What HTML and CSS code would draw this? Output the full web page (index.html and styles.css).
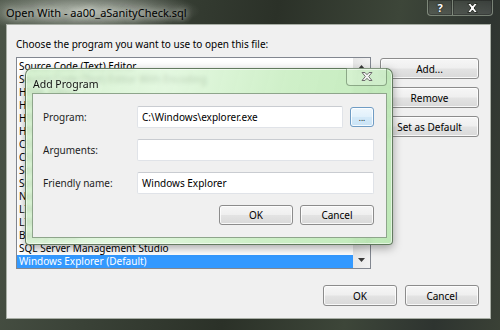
FILE: index.html
```html
<!DOCTYPE html>
<html lang="en">
<head>
    <meta charset="UTF-8">
    <meta name="viewport" content="width=device-width, initial-scale=1.0">
    <title>Open With</title>
    <link rel="stylesheet" href="styles.css">
</head>
<body>
    <div class="window">
        <div class="titlebar">
            <span class="title">Open With - aa00_aSanityCheck.sql</span>
            <div class="caption-buttons">
                <span class="cap-btn cap-help">?</span>
                <span class="cap-btn cap-close">
                    <svg width="13" height="10" viewBox="0 0 13 10"><path d="M1.5 0.5h3l2 2.4 2-2.4h3l-3.4 4.5 3.4 4.5h-3l-2-2.4-2 2.4h-3l3.4-4.5z" fill="#fff" stroke="#2a2f28" stroke-width="1"/></svg>
                </span>
            </div>
        </div>

        <div class="client">
            <p class="prompt">Choose the program you want to use to open this file:</p>
            <div class="main">
                <div class="listbox">
                    <ul class="items">
                        <li>Source Code (Text) Editor</li>
                        <li>Source Code (Text) Editor With Encoding</li>
                        <li>HTML Editor</li>
                        <li>HTML Editor with Encoding</li>
                        <li>HTML (Web Forms) Editor</li>
                        <li>HTML (Web Forms) Editor with Encoding</li>
                        <li>CSS Editor</li>
                        <li>CSS Editor with Encoding</li>
                        <li>Script Editor</li>
                        <li>Script Editor with Encoding</li>
                        <li>Notepad</li>
                        <li>LINQ to SQL Designer</li>
                        <li>LINQ to SQL Designer with Encoding</li>
                        <li>Binary Editor</li>
                        <li>SQL Server Management Studio</li>
                        <li class="selected">Windows Explorer (Default)</li>
                    </ul>
                    <div class="scrollbar">
                        <span class="arrow">
                            <svg width="7" height="4" viewBox="0 0 7 4"><path d="M0 4L3.5 0 7 4z" fill="#3a3a3a"/></svg>
                        </span>
                        <div class="track"><span class="thumb"></span></div>
                        <span class="arrow">
                            <svg width="7" height="4" viewBox="0 0 7 4"><path d="M0 0h7L3.5 4z" fill="#3a3a3a"/></svg>
                        </span>
                    </div>
                </div>
                <div class="side-buttons">
                    <button class="btn">Add...</button>
                    <button class="btn">Remove</button>
                    <button class="btn">Set as Default</button>
                </div>
            </div>
            <div class="footer">
                <button class="btn btn-wide">OK</button>
                <button class="btn btn-wide">Cancel</button>
            </div>
        </div>

        <!-- Add Program dialog sits over the Open With window -->
        <div class="dialog">
            <div class="dlg-title">
                <span>Add Program</span>
                <span class="dlg-close">
                    <svg width="12" height="9" viewBox="0 0 12 9"><path d="M1 0.5h3l2 2.2 2-2.2h3l-3.3 4 3.3 4h-3l-2-2.2-2 2.2h-3l3.3-4z" fill="#f4f4f4" stroke="#6d6d6d" stroke-width="1"/></svg>
                </span>
            </div>
            <div class="dlg-body">
                <div class="fields">
                    <label for="program">Program:</label>
                    <div class="textbox tb-short" id="program">C:\Windows\explorer.exe</div>
                    <button class="btn btn-browse">...</button>

                    <label for="arguments">Arguments:</label>
                    <div class="textbox tb-long" id="arguments"></div>

                    <label for="friendly">Friendly name:</label>
                    <div class="textbox tb-long" id="friendly">Windows Explorer</div>
                </div>
                <div class="dlg-footer">
                    <button class="btn btn-wide">OK</button>
                    <button class="btn btn-wide">Cancel</button>
                </div>
            </div>
        </div>
    </div>
</body>
</html>
```

FILE: styles.css
```css
* {
    box-sizing: border-box;
}
body {
    margin: 0;
    width: 500px;
    height: 330px;
    overflow: hidden;
    font-family: "Noto Sans", sans-serif;
    font-size: 10px;
    color: #000;
    background-color: #22271f;
}
.window {
    position: relative;
    width: 500px;
    height: 330px;
    display: flex;
    flex-direction: column;
    background:
        radial-gradient(ellipse 115px 22px at 85px 11px, rgba(200, 206, 196, 0.85), rgba(200, 206, 196, 0) 100%),
        linear-gradient(100deg, #4b5447 0%, #3a4237 25%, #2b3128 50%, #3d4639 72%, #2e3430 88%, #3a4136 100%);
}

/* title bar */
.titlebar {
    height: 24px;
    display: flex;
    align-items: flex-start;
}
.title {
    padding: 5px 0 0 6px;
    font-size: 11px;
    line-height: 16px;
    color: #000;
    text-shadow: 0 0 6px rgba(230, 234, 226, 0.9), 0 0 10px rgba(230, 234, 226, 0.7);
}
.caption-buttons {
    margin-left: auto;
    margin-right: 7px;
    display: flex;
}
.cap-btn {
    height: 17px;
    margin-top: -1px;
    display: flex;
    align-items: center;
    justify-content: center;
    border: 1px solid rgba(170, 182, 164, 0.55);
    background: linear-gradient(rgba(255, 255, 255, 0.06), rgba(255, 255, 255, 0.14));
    box-shadow: inset 0 0 0 1px rgba(0, 0, 0, 0.25);
}
.cap-help {
    width: 25px;
    border-right: none;
    border-radius: 0 0 0 4px;
    color: #fff;
    font-weight: bold;
    font-size: 11px;
    text-shadow: 0 0 2px #1c201b, 0 0 1px #1c201b;
}
.cap-close {
    width: 41px;
    border-radius: 0 0 4px 0;
}

/* client area */
.client {
    flex: 1;
    margin: 0 9px 11px 6px;
    padding: 12px 11px 0 9px;
    background-color: #f0f0f0;
    border: 1px solid #a8aea5;
}
.prompt {
    margin: 0 0 6px;
    line-height: 14px;
}
.main {
    display: flex;
    gap: 9px;
}
.listbox {
    width: 355px;
    height: 212px;
    display: flex;
    background-color: #fff;
    border: 1px solid #828790;
}
.items {
    flex: 1;
    margin: 0;
    padding: 2px 0 0;
    list-style: none;
    overflow: hidden;
}
.items li {
    height: 13px;
    line-height: 13px;
    padding-left: 2px;
    white-space: nowrap;
}
.items li.selected {
    height: 14px;
    background-color: #3399ff;
    color: #fff;
}
.scrollbar {
    width: 17px;
    display: flex;
    flex-direction: column;
    background: linear-gradient(to right, #e6e6e6, #f2f2f2);
}
.arrow {
    height: 17px;
    display: flex;
    align-items: center;
    justify-content: center;
}
.track {
    flex: 1;
    display: flex;
    flex-direction: column;
    justify-content: flex-end;
    align-items: center;
    padding-bottom: 6px;
}
.thumb {
    width: 13px;
    height: 60px;
    border: 1px solid #9b9b9b;
    border-radius: 2px;
    background: linear-gradient(to right, #ececec, #dadada);
}
.side-buttons {
    display: flex;
    flex-direction: column;
    gap: 8px;
    padding-top: 1px;
}
.side-buttons .btn {
    width: 99px;
}
.footer {
    margin-top: 16px;
    display: flex;
    justify-content: flex-end;
    gap: 8px;
}

/* buttons */
.btn {
    height: 21px;
    padding: 0;
    font-family: "Noto Sans", sans-serif;
    font-size: 10px;
    color: #000;
    border: 1px solid #8c8c8c;
    border-radius: 3px;
    background: linear-gradient(#f6f6f6 0%, #efefef 48%, #e3e3e3 52%, #d9d9d9 100%);
    box-shadow: inset 0 0 0 1px rgba(255, 255, 255, 0.8);
}
.btn-wide {
    width: 74px;
}

/* Add Program dialog */
.dialog {
    position: absolute;
    left: 25px;
    top: 68px;
    width: 368px;
    height: 177px;
    display: flex;
    flex-direction: column;
    padding: 0 5px 6px 6px;
    border: 1px solid rgba(70, 92, 68, 0.8);
    border-radius: 7px 7px 4px 4px;
    background: linear-gradient(105deg, rgba(205, 238, 198, 0.82) 0%, rgba(222, 246, 218, 0.85) 35%, rgba(196, 236, 188, 0.82) 65%, rgba(180, 230, 172, 0.85) 100%);
    backdrop-filter: blur(2px);
    box-shadow: inset 0 0 0 1px rgba(255, 255, 255, 0.55), 0 3px 10px rgba(0, 0, 0, 0.35);
}
.dlg-title {
    height: 24px;
    display: flex;
    align-items: flex-start;
}
.dlg-title span:first-child {
    padding: 7px 0 0 1px;
    font-size: 10.5px;
    line-height: 16px;
    color: #111;
    text-shadow: 0 0 6px rgba(255, 255, 255, 0.9);
}
.dlg-close {
    margin-left: auto;
    margin-top: -1px;
    width: 41px;
    height: 18px;
    display: flex;
    align-items: center;
    justify-content: center;
    border: 1px solid rgba(80, 110, 78, 0.55);
    border-top: none;
    border-radius: 0 0 4px 4px;
    background: rgba(255, 255, 255, 0.22);
}
.dlg-body {
    flex: 1;
    background-color: #f0f0f0;
    border: 1px solid #8ea58b;
    padding: 12px 12px 0 10px;
}
.fields {
    display: grid;
    grid-template-columns: 94px 206px 7px 24px;
    grid-auto-rows: 22px;
    row-gap: 11px;
    align-items: center;
}
.fields label {
    grid-column: 1;
    color: #1e1e1e;
}
.textbox {
    height: 22px;
    line-height: 20px;
    padding-left: 4px;
    background-color: #fff;
    border: 1px solid #e0e3e8;
    border-top-color: #c9ccd1;
    border-radius: 2px;
    white-space: nowrap;
}
.tb-short {
    grid-column: 2;
}
.tb-long {
    grid-column: 2 / 5;
}
.btn-browse {
    grid-column: 4;
    width: 24px;
    height: 20px;
    font-size: 8px;
    border-color: #6f9cc4;
    background: linear-gradient(#eef7fd 0%, #e0f0fb 50%, #d3e9f8 52%, #c9e3f6 100%);
}
.dlg-footer {
    margin-top: 11px;
    display: flex;
    justify-content: flex-end;
    gap: 7px;
}
.dlg-footer .btn {
    height: 20px;
}
```
